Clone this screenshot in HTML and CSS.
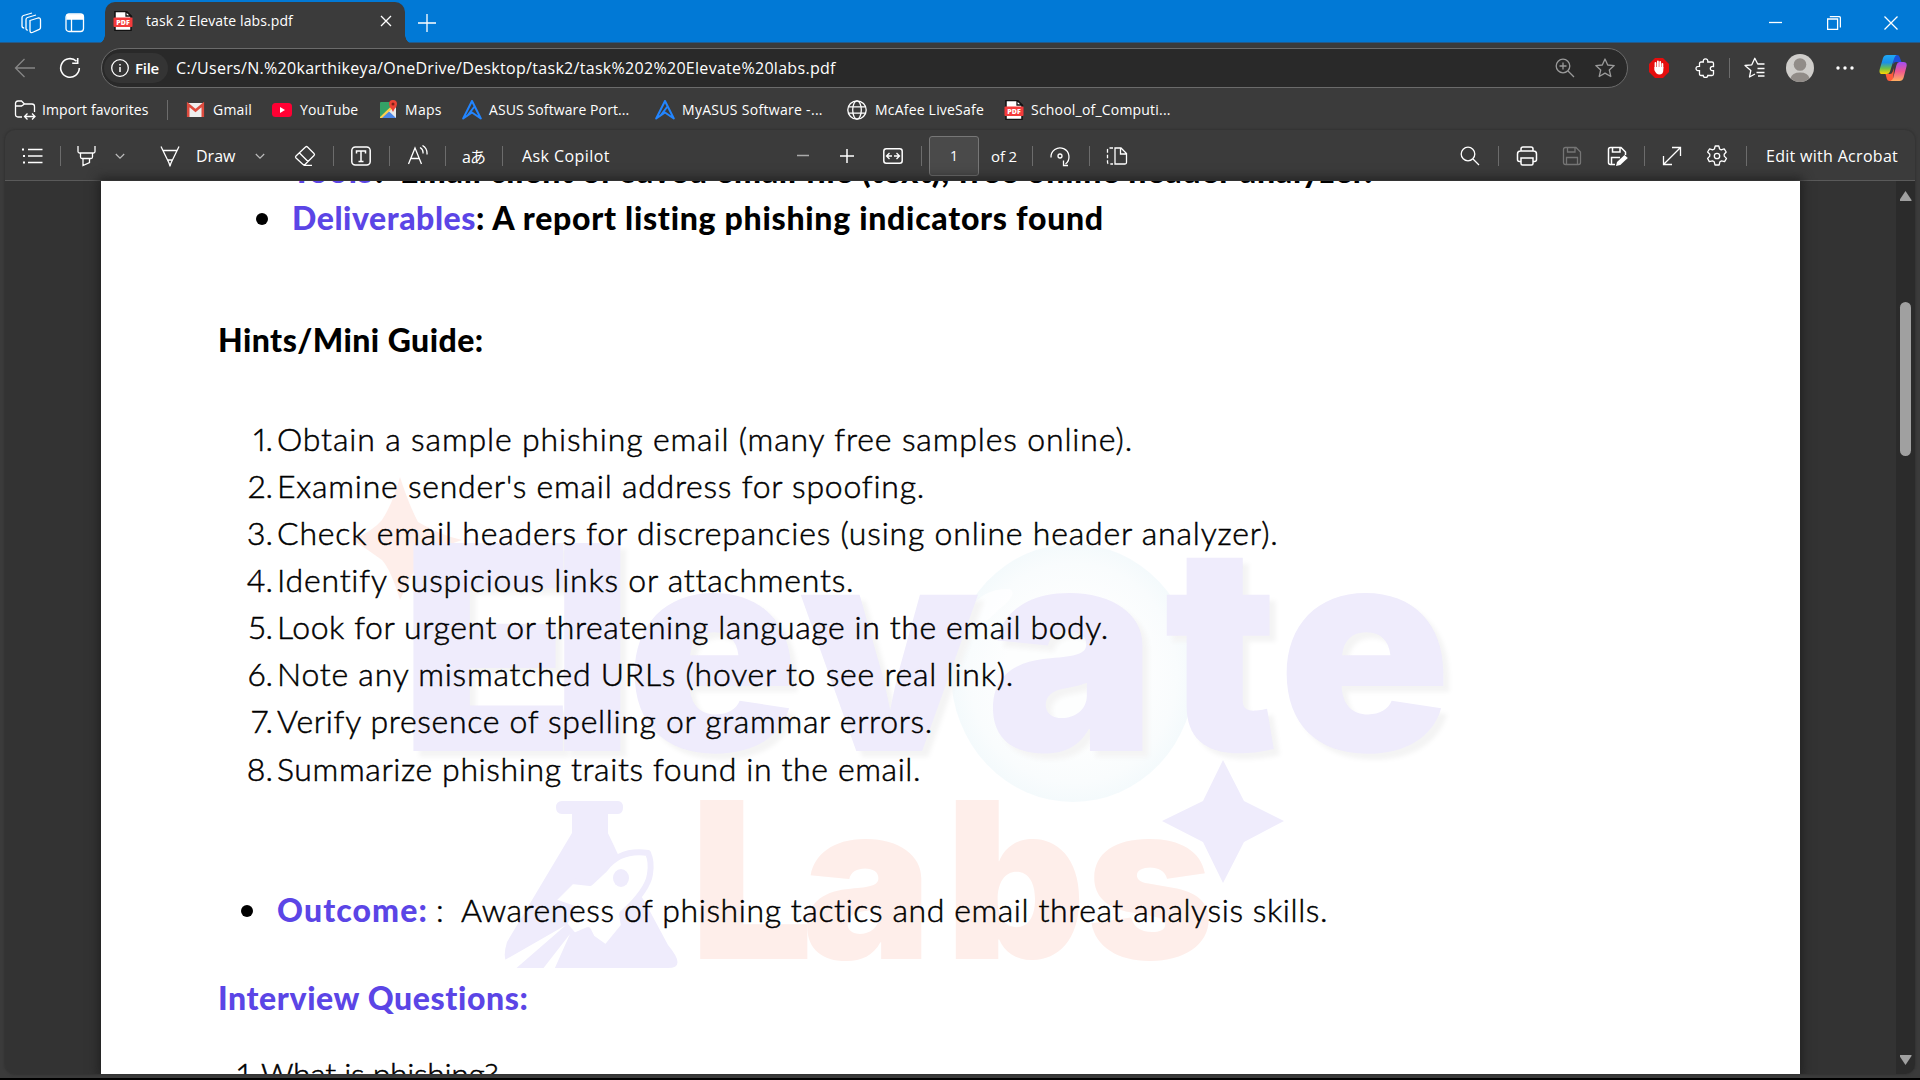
FILE: index.html
```html
<!DOCTYPE html>
<html lang="en">
<head>
<meta charset="utf-8">
<title>task 2 Elevate labs.pdf</title>
<link rel="stylesheet" href="styles.css">
</head>
<body>
<svg class="defs" width="0" height="0">
  <symbol id="pdf" viewBox="0 0 20 20">
    <path d="M2 .5h11.500l4.500 4.500v14.500H2z" fill="#fff" stroke="#111" stroke-width="1.500"/>
    <path d="M13 .5v4.500h5z" fill="#fff" stroke="#111"/>
    <rect x="0.500" y="6.500" width="19" height="9.500" rx="1" fill="#f33b3b" stroke="none"/>
    <text x="10" y="13.800" text-anchor="middle" class="pdf-label">PDF</text>
  </symbol>
  <symbol id="asus" viewBox="0 0 20 20">
    <path d="M10 1 1.200 18.500 10 12.500 18.800 18.500Z M5.500 15.500 12.500 6.500" fill="none" stroke="#2285ff" stroke-width="2" stroke-linejoin="round"/>
  </symbol>
  <symbol id="chevron" viewBox="0 0 10 10"><path d="M.8 3 5 7.200 9.200 3" fill="none" stroke="#bbb" stroke-width="1.200"/></symbol>
</svg>
<div class="browser">
  <header class="titlebar">
    <svg class="ic" viewBox="0 0 22 22"><path d="M10 8.500 18 6q2.500-.7 2.500 2v7.500q0 1.200-1.200 1.800l-7 3.200q-2 .6-2.300-1.500V10q0-1 0-1.500zM7.800 18Q6.200 18.300 6 16.500V7.500q0-1.500 1.500-2L16 3M4.200 16Q2 16 2 14V5.500Q2 4 3.500 3.500L12 1"/></svg>
    <svg class="ic" viewBox="0 0 22 22"><rect x="2" y="2" width="17.500" height="17.500" rx="3"/><path d="M3 3h15.500v4H3z" fill="#fff"/><path d="M7.500 7v12"/></svg>
    <div class="tab">
      <svg class="ic20"><use href="#pdf"/></svg>
      <span class="label s1">task 2 Elevate labs.pdf</span>
      <svg class="ic12" viewBox="0 0 12 12"><path d="M1 1l10 10M11 1 1 11"/></svg>
    </div>
    <svg class="ic18" viewBox="0 0 18 18"><path d="M9 0v18M0 9h18"/></svg>
    <svg class="ic14" viewBox="0 0 14 14"><path d="M0 6.500h13"/></svg>
    <svg class="ic14" viewBox="0 0 14 14"><path d="M.6 3h10v10.400H.6zM2.800 .7H12q1.400 0 1.400 1.400v9.400"/></svg>
    <svg class="ic14" viewBox="0 0 14 14"><path d="M.5.5l13 13M13.500.5l-13 13"/></svg>
  </header>

  <nav class="navbar">
    <svg class="ic dim" viewBox="0 0 22 22"><path d="M21 11H1.500M10.500 2 1.500 11l9 9"/></svg>
    <svg class="ic" viewBox="0 0 22 22"><path d="M17.500 4.300A9.300 9.300 0 1 0 20.300 11M18.700 1v5.300h-5.500" stroke-width="1.600"/></svg>
    <div class="address">
      <div class="chip">
        <svg class="ic18" viewBox="0 0 18 18"><circle cx="9" cy="9" r="8.300"/><path d="M9 8v5M9 5v1.400" stroke-width="1.500"/></svg>
        <span class="scheme">File</span>
      </div>
      <span class="url s3">C:/Users/N.%20karthikeya/OneDrive/Desktop/task2/task%202%20Elevate%20labs.pdf</span>
      <svg class="ic20 grey" viewBox="0 0 20 20"><circle cx="8" cy="8" r="6.800"/><path d="M13 13l6 6M8 4.500v7M4.500 8h7"/></svg>
      <svg class="ic20 grey" viewBox="0 0 20 20"><path d="M10 1l2.700 6 6.500.6-4.900 4.400 1.500 6.500L10 15.100l-5.800 3.400 1.500-6.500L.8 7.600 7.300 7z" stroke-linejoin="round"/></svg>
    </div>
    <svg class="ic20" viewBox="0 0 20 20"><path d="M6 0h8l6 6v8l-6 6H6l-6-6V6z" fill="#e40d0d" stroke="none"/><path d="M6.500 10V5M8.900 9V3.500M11.200 9V4M13.400 10V6" stroke-width="1.800" stroke-linecap="round"/><path d="M5.500 9h8.800v3q0 4.500-4 4.500-3 0-5-4.500z" fill="#fff" stroke="none"/></svg>
    <svg class="ic20" viewBox="0 0 20 20"><path d="M6 4h2.300Q8 .8 10.500.8T12.800 4H17q1.500 0 1.500 1.500v3q-3.200-.3-3.200 2t3.200 2.200V16q0 1.500-1.500 1.500h-4.200q0 2-2.300 2t-2.300-2H6q-1.500 0-1.500-1.500v-3.300q-3.500.2-3.500-2.200t3.500-2.200V5.500Q4.500 4 6 4z"/></svg>
    <i class="sep"></i>
    <svg class="ic" viewBox="0 0 22 22"><path d="M11 17l-5.500 3 1.300-6.500L1 8.500l6.800-.7 3-6.500 2.900 5.700h6.800M13.500 11.500h7M12.500 15.500h8M14 19h6.500" stroke-linejoin="round"/></svg>
    <svg class="ic28" viewBox="0 0 28 28"><circle cx="14" cy="14" r="14" fill="#cfcdca" stroke="none"/><circle cx="14" cy="10.500" r="6.300" fill="#918c88" stroke="none"/><path d="M4.500 24.300Q6 18.500 14 18.500t9.500 5.800A14 14 0 0 1 4.500 24.300" fill="#918c88" stroke="none"/></svg>
    <svg class="ic" viewBox="0 0 22 22"><g fill="#fff" stroke="none"><circle cx="4" cy="11" r="1.700"/><circle cx="11" cy="11" r="1.700"/><circle cx="18" cy="11" r="1.700"/></g></svg>
    <svg class="ic28" viewBox="0 0 28 28">
      <defs>
        <linearGradient id="g1" x1="0" y1="0" x2="0" y2="1"><stop offset="0" stop-color="#1fa8f5"/><stop offset=".4" stop-color="#1a8fe8"/><stop offset=".7" stop-color="#6cc04a"/><stop offset="1" stop-color="#ffd500"/></linearGradient>
        <linearGradient id="g2" x1="0" y1="0" x2="0" y2="1"><stop offset="0" stop-color="#a04df5"/><stop offset=".5" stop-color="#f0588f"/><stop offset="1" stop-color="#ffb060"/></linearGradient>
      </defs>
      <path d="M14 1h4q2 0 2.700 2.300L22.500 8H17q-2 0-2.700 2.300z" fill="#1c4fd8" stroke="none"/>
      <path d="M14 27h-3.500q-2 0-2.700-2.300L6.500 20H11q2 0 2.700-2.300L15 14z" fill="#ff5b3a" stroke="none"/>
      <path d="M8 1h9.500q-1.500.8-2.200 3L11 17.500q-.8 2.500-3.500 2.500H3.500Q-.5 20 .8 15L4 4Q5 1 8 1z" fill="url(#g1)" stroke="none"/>
      <path d="M20.500 8h4q4 0 3 4.500L24.500 24q-1 3-4 3h-9q2-1 2.700-3L17.500 11q.8-3 3-3z" fill="url(#g2)" stroke="none"/>
    </svg>
  </nav>

  <nav class="bookmarks">
    <svg class="ic" viewBox="0 0 22 22"><path d="M8 18H4q-2.500 0-2.500-2.500v-11Q1.500 2 4 2h3.500l3 3H18q2.500 0 2.500 2.500V13M1.500 7h6l3-2M11 17.500h10M13.500 14.500l-3 3 3 3M18 14.500l3 3-3 3"/></svg>
    <span class="label s1">Import favorites</span>
    <i class="sep"></i>
    <svg class="ic20" viewBox="0 0 20 20"><path d="M1 3h17v14H1z" fill="#eee" stroke="none"/><path d="M2.200 17V4.500l7.300 6 7.300-6V17" fill="none" stroke="#dd4b3e" stroke-width="2.600"/></svg>
    <span class="label s2">Gmail</span>
    <svg class="ic20" viewBox="0 0 20 20"><rect y="3" width="20" height="14" rx="3.500" fill="#ff0033" stroke="none"/><path d="M8 7l5 3-5 3z" fill="#fff" stroke="none"/></svg>
    <span class="label s1">YouTube</span>
    <svg class="ic20" viewBox="0 0 20 20"><g stroke="none"><rect x="1" y="2" width="16" height="16" rx="1" fill="#34a266"/><path d="M1 18 16 4l1 1v13z" fill="#e9e9e9"/><path d="M9 10.500l8 7.500H2z" fill="#4a86e8"/><path d="M1 17 13 5.500l1.800 1.800L3 18H1z" fill="#fcd14d"/><path d="M14 0a4 4 0 0 1 4 4q0 2.500-2.500 5L14 12l-1.500-3Q10 6.500 10 4a4 4 0 0 1 4-4z" fill="#ea4335"/><circle cx="14" cy="4" r="1.500" fill="#7e2118"/></g></svg>
    <span class="label s3">Maps</span>
    <svg class="ic20"><use href="#asus"/></svg>
    <span class="label s1">ASUS Software Port...</span>
    <svg class="ic20"><use href="#asus"/></svg>
    <span class="label s3">MyASUS Software -...</span>
    <svg class="ic20" viewBox="0 0 20 20"><circle cx="10" cy="10" r="9.200"/><ellipse cx="10" cy="10" rx="4.300" ry="9.200"/><path d="M1.500 6.800h17M1.500 13.200h17"/></svg>
    <span class="label s2">McAfee LiveSafe</span>
    <svg class="ic20"><use href="#pdf"/></svg>
    <span class="label s2">School_of_Computi...</span>
  </nav>

  <main class="viewer">
    <div class="tools">
      <svg class="ic" viewBox="0 0 22 22"><path d="M7 4.500h14.500M7 11h14.500M7 17.500h14.500" stroke-width="1.500"/><path d="M1 4.500h2M2 11h2M2 17.500h2" stroke-width="2"/></svg>
      <i class="sep"></i>
      <svg class="ic" viewBox="0 0 22 22"><path d="M2 1v5.500q0 1.500 1.500 1.500h14q1.500 0 1.500-1.500V1M4.500 8v4q0 1.500 1.500 1.500h9q1.500 0 1.500-1.500V8M7 13.500v7l6.500-3v-4"/></svg>
      <svg class="ic10"><use href="#chevron"/></svg>
      <svg class="ic" viewBox="0 0 22 22"><path d="M1 1.500l8 16.500 1 3 1-3 8-16.500M2.500 5.500h15M7.500 15h5" stroke-linejoin="round"/></svg>
      <span class="cmd">Draw</span>
      <svg class="ic10"><use href="#chevron"/></svg>
      <svg class="ic" viewBox="0 0 22 22"><path d="M13.500 2 20 8.500q1 1 0 2L11.500 19q-1.500 1.500-3 0L2 13q-1-1 0-2L11.500 2q1-1 2 0zM5.500 8l8.500 8.500M9.500 20.300H18" stroke-linejoin="round"/></svg>
      <i class="sep"></i>
      <svg class="ic20" viewBox="0 0 20 20"><rect x=".8" y="1" width="18.400" height="18" rx="3.500" stroke-width="1.500"/><path d="M5.500 7.500V5h9v2.500M10 5v10.500M7.500 15.500h5" stroke-width="1.500"/></svg>
      <i class="sep"></i>
      <svg class="ic" viewBox="0 0 22 22"><path d="M1.500 19 8 3l6.500 16M4 13.500h8M13 2.500q3.500 2 3 6M15.500.5q5 3 4.500 9"/></svg>
      <i class="sep"></i>
      <span class="translate">aあ</span>
      <i class="sep"></i>
      <span class="cmd s4">Ask Copilot</span>
      <svg class="ic14" viewBox="0 0 14 14"><path d="M1 6.500h12" stroke="#aaa" stroke-width="1.600"/></svg>
      <svg class="ic14" viewBox="0 0 14 14"><path d="M7 0v14M0 7h14" stroke-width="1.500"/></svg>
      <svg class="ic20" viewBox="0 0 20 20"><rect x=".8" y="2.800" width="18.400" height="14.400" rx="2.500" stroke-width="1.500"/><path d="M3.500 10H9M11 10h5.500M6.500 7l-3 3 3 3M13.500 7l3 3-3 3"/></svg>
      <i class="sep"></i>
      <div class="page-no">1</div>
      <span class="count">of 2</span>
      <i class="sep"></i>
      <svg class="ic" viewBox="0 0 22 22"><path d="M2 12.500A9 9 0 1 1 16.500 19M19 20.500h-4.500v-5"/><circle cx="11" cy="11" r="2"/></svg>
      <i class="sep"></i>
      <svg class="ic" viewBox="0 0 22 22"><path d="M9 3h6l5.500 5.500v9q0 1.500-1.500 1.500H9zM14.500 3v6h6"/><path d="M7 3H3.500Q1.500 3 1.500 5v12q0 2 2 2H7" stroke-dasharray="3.500 2"/></svg>
      <svg class="ic20" viewBox="0 0 20 20"><circle cx="8" cy="8" r="6.800"/><path d="M13 13l6 6"/></svg>
      <i class="sep"></i>
      <svg class="ic" viewBox="0 0 22 22"><path d="M5 6V4q0-2 2-2h8q2 0 2 2v2M5 16.500H3.500q-2 0-2-2V9q0-3 3-3h13q3 0 3 3v5.500q0 2-2 2H17M5 13h12v5.500q0 1.500-1.500 1.500h-9Q5 20 5 18.500z" stroke-width="1.500"/></svg>
      <svg class="ic20 off" viewBox="0 0 20 20"><path d="M3.500 1.500H14l4.500 4.500v10.500q0 2-2 2h-13q-2 0-2-2v-13q0-2 2-2zM5.500 1.500V6h7.500V1.500M4.500 18.500v-7h11v7"/></svg>
      <svg class="ic" viewBox="0 0 22 22"><path d="M8 19.500H3.500q-2 0-2-2v-13q0-2 2-2H14l4.500 4.500v3M5.500 2.500V7h7.500V2.500M4.500 19.500v-7H13" stroke-width="1.500"/><path d="M9 21l1-4 7.500-7 3.300 3-7.500 7z" fill="#fff" stroke="none"/></svg>
      <i class="sep"></i>
      <svg class="ic20" viewBox="0 0 20 20"><path d="M1.500 18.500l17-17M10 1.500h8.500V10M1.500 10v8.500H10"/></svg>
      <svg class="ic" viewBox="0 0 22 22"><circle cx="11" cy="11" r="2.700"/><path d="M9.200 1h3.600l.8 3 1.600.9 3-1 2 3.100-2 2.300v1.800l2.300 2.300-1.900 3.200-3-.8-1.700 1-.8 3.200H9l-.8-3.200-1.700-1-3.200.8-1.700-3.200 2.200-2.300V9.300L1.600 7l2-3.100 3 1 1.800-.9z" stroke-linejoin="round"/></svg>
      <i class="sep"></i>
      <span class="cmd s3">Edit with Acrobat</span>
    </div>

    <div class="canvas">
      <article class="page">
        <svg class="watermark" viewBox="101 181 1699 893">
          <defs><radialGradient id="ring"><stop offset=".55" stop-color="#fdfefe"/><stop offset=".85" stop-color="#f9fcfd"/><stop offset="1" stop-color="#f4fafc"/></radialGradient></defs>
          <path d="M400 477Q409 505 418 522 440 535 462 540 436 548 420 560 410 578 400 600 391 570 382 560 367 549 352 540 373 531 382 520 393 503 400 477z" fill="#feeeea"/>
          <ellipse cx="1073" cy="673" rx="122" ry="129" fill="url(#ring)"/>
          <path d="M970 610q12-22 40-21 8 5-8 18-20 18-28 27-6-8-4-24z" fill="#fff" opacity=".7"/>
          <text class="wm-big" x="400 550 626 799 986 1164 1278" y="751">Elevate</text>
          <text class="wm-small" x="690 802 945 1086" y="959">Labs</text>
          <path d="M1223 760l21 41 40 20-40 21-21 41-20-41-41-21 41-20z" fill="#efecfc"/>
          <path d="M562 801h56q5 0 5 6.500T618 814h-10v19l60 112q20 24-2 23H519q-20 0-12-26l65-109v-19h-10q-6 0-6-6.500T562 801z" fill="#efecfc"/>
          <path d="M608 833l45 15-4 50 20 40-40-60z" fill="#fff"/>
          <path d="M648 853q-28-4-43 16l-15 14-18-2-20 20 20 7-8 16 10 12 14-6 4 8 14 10 18-22-2-12q26-24 28-40 2-12-2-21z" fill="#fff" stroke="#efecfc" stroke-width="6" stroke-linejoin="round"/>
          <ellipse cx="621" cy="878" rx="8" ry="9" fill="#efecfc"/>
          <path d="M566 925l-63 36 10 10zM570 934l-28 36h12z" fill="#fff"/>
        </svg>
        <ul class="bullets">
          <li><b class="accent tools-key">Tools</b><b class="colon">:</b><b class="tools-text">Email client or saved email file (text), free online header analyzer.</b></li>
          <li><b class="accent deliver-key">Deliverables</b><b class="deliver-text">: A report listing phishing indicators found</b></li>
        </ul>
        <h2 class="hints">Hints/Mini Guide:</h2>
        <ol class="steps">
          <li>Obtain a sample phishing email (many free samples online).</li>
          <li>Examine sender's email address for spoofing.</li>
          <li>Check email headers for discrepancies (using online header analyzer).</li>
          <li>Identify suspicious links or attachments.</li>
          <li>Look for urgent or threatening language in the email body.</li>
          <li>Note any mismatched URLs (hover to see real link).</li>
          <li>Verify presence of spelling or grammar errors.</li>
          <li>Summarize phishing traits found in the email.</li>
        </ol>
        <ul class="bullets outcome">
          <li><b class="accent outcome-key">Outcome:</b><span class="outcome-colon">:</span><span class="outcome-text">Awareness of phishing tactics and email threat analysis skills.</span></li>
        </ul>
        <h2 class="accent questions">Interview Questions:</h2>
        <p class="question"><span>1.</span><span>What is phishing?</span></p>
      </article>
      <div class="scrollbar"><i class="up"></i><i class="thumb"></i><i class="down"></i></div>
    </div>
  </main>
</div>
</body>
</html>
```
FILE: styles.css
```css
* { box-sizing: border-box; }
body { margin: 0; background: #000; overflow: hidden; }
.defs { position: absolute; }
.browser {
  width: 1920px; height: 1078px; background: #3b3b3b; color: #fff;
  font-family: "Open Sans", "Noto Sans", "Noto Sans CJK JP", sans-serif;
  display: flex; flex-direction: column;
}
svg { display: block; fill: none; stroke: #fff; stroke-width: 1.3; flex: none; }
.ic { width: 22px; height: 22px; }
.ic10 { width: 10px; height: 10px; }
.ic12 { width: 12px; height: 12px; }
.ic14 { width: 14px; height: 14px; }
.ic18 { width: 18px; height: 18px; }
.ic20 { width: 20px; height: 20px; }
.ic28 { width: 28px; height: 28px; }
.dim { stroke: #868686; }
.grey { stroke: #9a9a9a; }
.off { stroke: #757575; }
.pdf-label { font: 800 7px "Open Sans", sans-serif; fill: #fff; stroke: none; }
.sep { width: 1px; height: 20px; background: #6c6c6c; }
span, b { white-space: pre; }
.label { font-size: 14px; }
.scheme { font-size: 15px; font-weight: 600; letter-spacing: -.25px; }
.url, .cmd { font-size: 16px; }
.count { font-size: 15px; letter-spacing: -.14px; }
.translate { font-size: 16px; letter-spacing: -.9px; }
.s1 { letter-spacing: .1px; }
.s2 { letter-spacing: .2px; }
.s3 { letter-spacing: .3px; }
.s4 { letter-spacing: .43px; }

.titlebar, .navbar, .bookmarks, .tools { display: grid; align-items: center; flex: none; }
.titlebar {
  height: 43px; background: #0179d6; border-bottom: 1px solid #235a8a;
  grid-template-columns: 44px 42px 312px 1351px 58px 57px 1fr; padding: 0 0 3px 20px;
}
.tab {
  position: relative; height: 43px; width: 300px; background: #3b3b3b; border-radius: 10px 10px 0 0;
  display: grid; grid-template-columns: 33px 234px 1fr; align-items: center; padding: 0 0 6px 8px; margin: 2px 0 0 -1px;
}
.tab::before, .tab::after { content: ""; position: absolute; bottom: 0; width: 10px; height: 10px; }
.tab::before { left: -10px; background: radial-gradient(circle at 0 0, transparent 9.5px, #3b3b3b 10px); }
.tab::after { right: -10px; background: radial-gradient(circle at 100% 0, transparent 9.5px, #3b3b3b 10px); }

.navbar {
  height: 50px; padding-left: 14px;
  grid-template-columns: 45px 42px 1548px 46px 34px 15px 42px 48px 45px 1fr;
}
.address {
  width: 1527px; height: 40px; border: 1px solid #6b6b6b; border-radius: 20px; background: #292929;
  display: grid; grid-template-columns: 72px 1379px 40px 1fr; align-items: center; padding-left: 2px;
}
.chip {
  width: 64px; height: 30px; border-radius: 15px; background: #343434;
  display: grid; grid-template-columns: 24px 1fr; align-items: center; padding-left: 7px;
}

.bookmarks {
  height: 37px; padding: 0 0 4px 14px;
  grid-template-columns: 28px 125px 19px 27px 59px 28px 79px 26px 57px 27px 166px 27px 165px 28px 129px 27px 1fr;
}

.viewer {
  margin: 0 5px; height: 944px; border-radius: 10px; overflow: hidden;
  box-shadow: 0 0 2px 1px #333;
}
.tools {
  height: 51px; border-bottom: 1px solid #5a5a5a; padding: 1px 0 0 16px;
  grid-template-columns: 39px 16px 39px 45px 36px 59px 39px 39px 18px 38px 18px 38px 17px 40px 20px 274px 44px 43px 38px 8px 62px 41px 17px 40px 17px 354px 38px 18px 46px 45px 37px 18px 44px 40px 20px 1fr;
}
.page-no {
  width: 50px; height: 40px; border: 1px solid #777; border-radius: 3px; background: #4a4a4a;
  font-size: 14px; line-height: 38px; text-align: center;
}

.canvas { height: 893px; background: #333; display: flex; justify-content: space-between; padding-left: 96px; }
.page {
  position: relative; width: 1699px; height: 893px; background: #fff; color: #000; overflow: hidden;
  box-shadow: 0 0 10px 3px #222;
  font-family: Lato, sans-serif; font-size: 32px; line-height: 47px; font-weight: 300;
}
.steps, .outcome-colon, .outcome-text, .question { -webkit-text-stroke: .5px #000; }
.watermark { position: absolute; left: 0; top: 0; width: 1699px; height: 893px; stroke: none; }
.wm-big { font: 900 286px Inter, sans-serif; fill: #efecfc; filter: drop-shadow(6px 6px 2px #f4f4f4); }
.wm-small { font: 900 218px Inter, sans-serif; fill: #feeeea; }
.accent { color: #5b45e6; }
b, h2 { font-weight: 900; }
.bullets, .steps, h2, .question { position: relative; margin: 0; padding: 0; list-style: none; font-size: 32px; }
.bullets { padding-left: 190px; margin-top: -34px; }
.bullets li { display: flex; height: 47px; }
.bullets li::before {
  content: ""; width: 12px; height: 12px; border-radius: 6px; background: #000;
  margin: 19px 24px 0 -35px;
}
.tools-key { width: 83px; letter-spacing: 1.4px; }
.colon { width: 25px; }
.tools-text { letter-spacing: .76px; }
.deliver-key { letter-spacing: .55px; }
.deliver-text { letter-spacing: .72px; }
h2 { padding-left: 117px; margin-top: 75px; }
.hints { letter-spacing: .45px; }
.steps { margin-top: 52px; padding-left: 101px; counter-reset: n; }
.steps li { display: grid; grid-template-columns: 71px 1fr; column-gap: 4px; height: 47.080px; counter-increment: n; }
.steps li::before { content: counter(n) "."; text-align: right; letter-spacing: 0; font-feature-settings: "pnum"; }
.steps li:nth-child(1) { letter-spacing: .85px; }
.steps li:nth-child(2) { letter-spacing: .75px; }
.steps li:nth-child(3) { letter-spacing: .8px; }
.steps li:nth-child(4) { letter-spacing: .77px; }
.steps li:nth-child(5) { letter-spacing: .59px; }
.steps li:nth-child(6) { letter-spacing: .77px; }
.steps li:nth-child(7) { letter-spacing: .68px; }
.steps li:nth-child(8) { letter-spacing: .61px; }
.outcome { padding-left: 176px; margin-top: 94px; }
.outcome li::before { margin-left: -36px; }
.outcome-key { width: 159px; letter-spacing: 1.12px; }
.outcome-colon { width: 25px; }
.outcome-text { letter-spacing: .58px; }
.questions { margin-top: 41px; letter-spacing: .6px; }
.question { padding-left: 134px; margin-top: 29px; display: grid; grid-template-columns: 26px 1fr; letter-spacing: -.35px; }
.scrollbar {
  width: 19px; background: #2b2b2b; display: flex; flex-direction: column; align-items: center; padding: 10px 0 9px;
}
.up, .down { width: 12px; height: 10px; background: #a0a0a0; }
.up { clip-path: polygon(50% 0, 100% 90%, 100% 100%, 0 100%, 0 90%); }
.down { clip-path: polygon(0 0, 100% 0, 100% 10%, 50% 100%, 0 10%); margin-top: auto; }
.thumb { width: 11px; height: 154px; border-radius: 6px; background: #a0a0a0; margin-top: 101px; }
```
